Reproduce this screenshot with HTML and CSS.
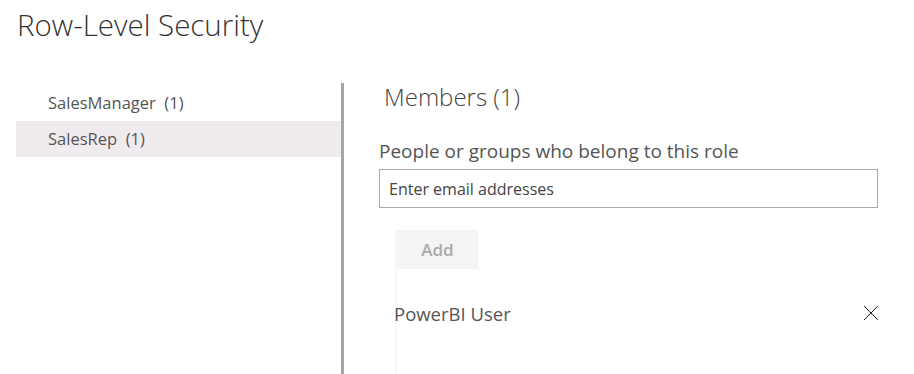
FILE: index.html
```html
<!DOCTYPE html>
<html lang="en">
<head>
    <meta charset="UTF-8">
    <title>Row-Level Security</title>
    <link rel="stylesheet" href="styles.css">
</head>
<body>
    <h1 class="title">Row-Level Security</h1>

    <div class="layout">
        <ul class="roles">
            <li class="role">SalesManager&nbsp; (1)</li>
            <li class="role selected">SalesRep&nbsp; (1)</li>
        </ul>

        <div class="panel">
            <h2 class="members-title">Members (1)</h2>
            <label class="field-label" for="email-input">People or groups who belong to this role</label>
            <input type="text" id="email-input" class="email-input" placeholder="Enter email addresses">
            <div class="members">
                <button class="add-btn" disabled>Add</button>
                <div class="member">
                    <span class="member-name">PowerBI User</span>
                    <svg class="remove" width="16" height="16" viewBox="0 0 16 16">
                        <path d="M1 1 L15 15 M15 1 L1 15" stroke="#222" stroke-width="1" fill="none"/>
                    </svg>
                </div>
            </div>
        </div>
    </div>
</body>
</html>
```

FILE: styles.css
```css
body {
    margin: 0;
    font-family: 'Open Sans', 'Noto Sans', sans-serif;
    background: #fff;
    color: #333;
    height: 374px;
    overflow: hidden;
}

.title {
    margin: 0;
    padding: 4px 0 0 17px;
    height: 83px;
    box-sizing: border-box;
    font-size: 29.5px;
    font-weight: 300;
    color: #333;
}

.layout {
    display: flex;
    height: 291px;
}

.roles {
    list-style: none;
    margin: 0;
    padding: 2px 0 0 16px;
    width: 325px;
    border-right: 3px solid #a6a6a6;
}

.role {
    height: 36px;
    line-height: 36px;
    padding-left: 32px;
    font-size: 16.5px;
    color: #555;
}

.role.selected {
    background: #efebef;
}

.panel {
    flex: 1;
    padding-left: 35px;
}

.members-title {
    margin: 0;
    padding: 0 0 0 5px;
    height: 52px;
    line-height: 28px;
    font-size: 24px;
    font-weight: 300;
    color: #444;
}

.field-label {
    display: block;
    height: 34px;
    line-height: 32px;
    font-size: 19px;
    color: #555;
}

.email-input {
    display: block;
    width: 499px;
    height: 39px;
    box-sizing: border-box;
    border: 1px solid #aaa;
    padding: 0 9px;
    font-family: inherit;
    font-size: 16px;
    color: #333;
}

.email-input::placeholder {
    color: #444;
}

.members {
    margin: 22px 0 0 16px;
    border-left: 2px solid #f7f7f7;
    height: 146px;
    width: 483px;
}

.add-btn {
    display: block;
    width: 81px;
    height: 39px;
    border: none;
    background: #f4f4f4;
    font-family: inherit;
    font-size: 17px;
    font-weight: 600;
    color: #aaa;
}

.member {
    display: flex;
    align-items: center;
    justify-content: space-between;
    margin-top: 24px;
    height: 40px;
    margin-left: -3px;
}

.member-name {
    font-size: 18.5px;
    color: #555;
}

.remove {
    margin-right: 1px;
}
```
